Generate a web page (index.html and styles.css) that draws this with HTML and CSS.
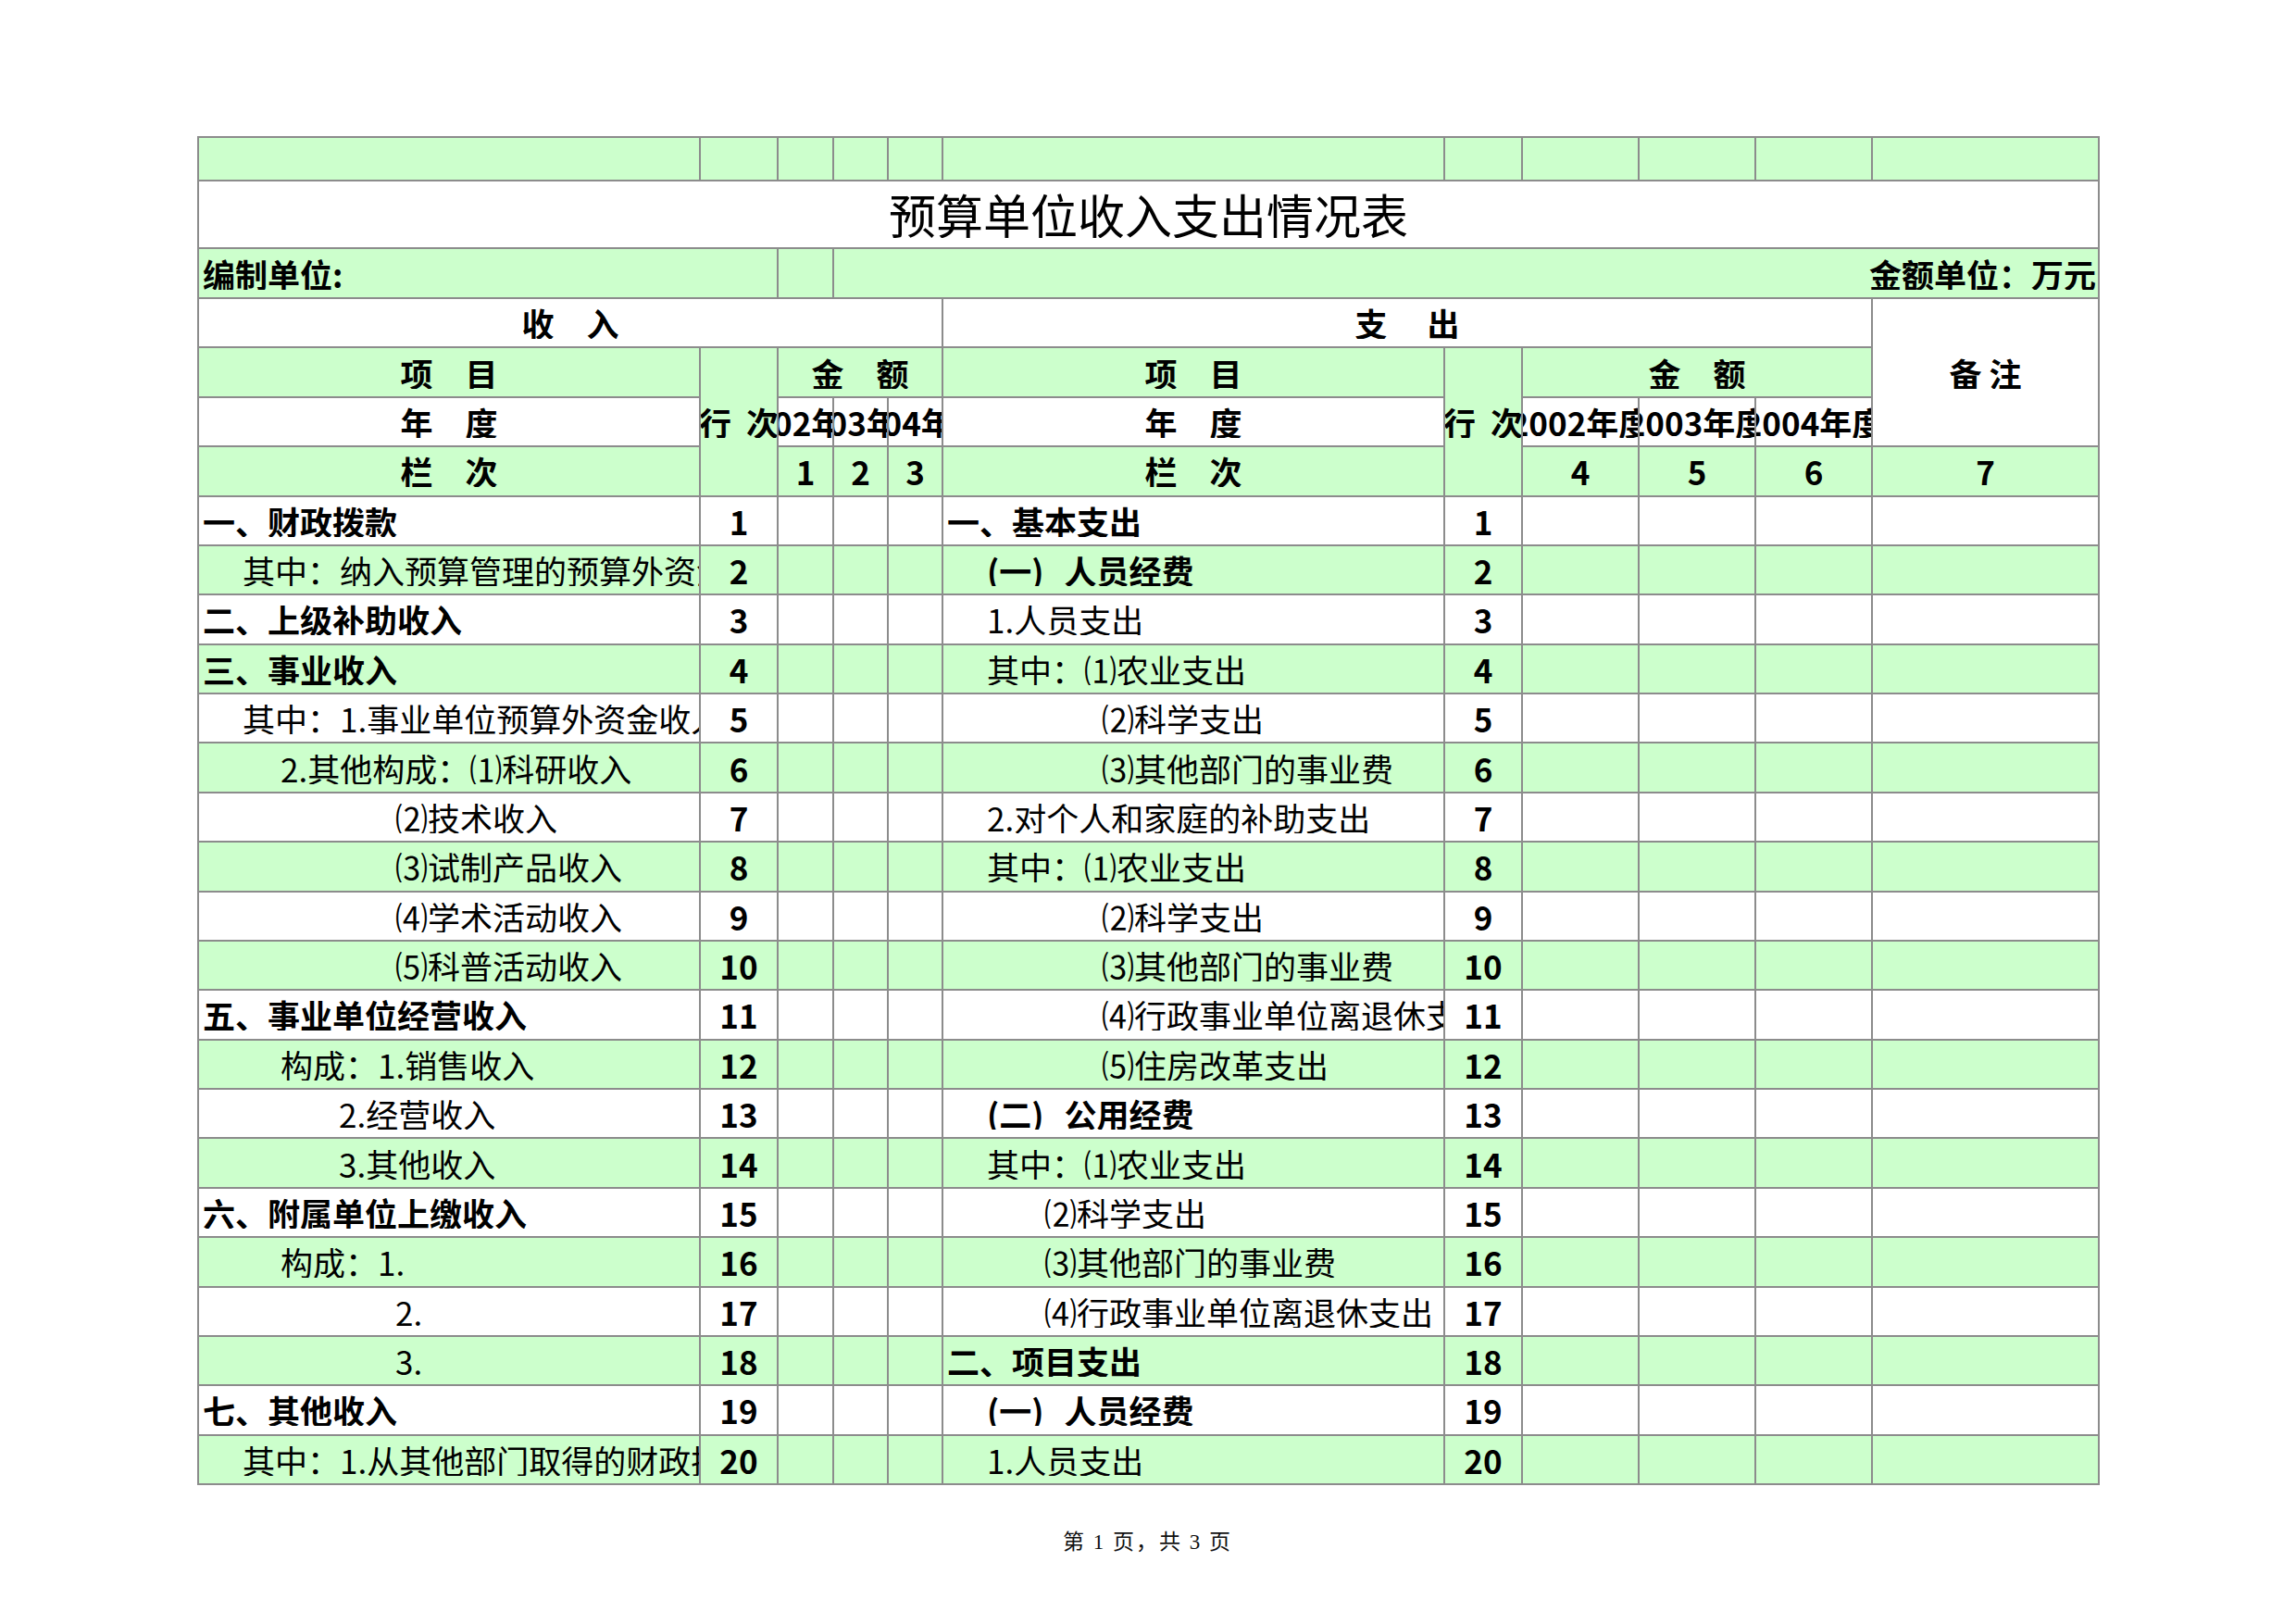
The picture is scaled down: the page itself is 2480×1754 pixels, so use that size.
FILE: index.html
```html
<!DOCTYPE html>
<html lang="zh-CN">
<head>
<meta charset="utf-8">
<title>预算单位收入支出情况表</title>
<link rel="stylesheet" href="styles.css">
</head>
<body>
<div class="page">
<table class="sheet">
<colgroup>
<col class="w-item"><col class="w-row"><col class="w-a1"><col class="w-a2"><col class="w-a2">
<col class="w-item"><col class="w-row"><col class="w-b"><col class="w-b"><col class="w-b"><col class="w-note">
</colgroup>
<tbody>
<tr class="r-top g">
<td></td><td></td><td></td><td></td><td></td><td></td><td></td><td></td><td></td><td></td><td></td>
</tr>
<tr class="r-title">
<td colspan="11"><div class="c ctr title">预算单位收入支出情况表</div></td>
</tr>
<tr class="r-unit g">
<td colspan="2"><div class="c b i0">编制单位:</div></td>
<td></td>
<td colspan="8"><div class="c b rt">金额单位：万元</div></td>
</tr>
<tr class="rh">
<td colspan="5"><div class="c ctr b">收　入</div></td>
<td colspan="5"><div class="c ctr b">支　 出</div></td>
<td rowspan="3"><div class="c ctr b">备 注</div></td>
</tr>
<tr class="rh g">
<td><div class="c ctr b">项　目</div></td>
<td rowspan="3"><div class="c ctr b">行&nbsp;&nbsp;次</div></td>
<td colspan="3"><div class="c ctr b">金　额</div></td>
<td><div class="c ctr b">项　目</div></td>
<td rowspan="3"><div class="c ctr b">行&nbsp;&nbsp;次</div></td>
<td colspan="3"><div class="c ctr b">金　额</div></td>
</tr>
<tr class="rh">
<td><div class="c ctr b">年　度</div></td>
<td><div class="c ctr b">2002年度</div></td>
<td><div class="c ctr b">2003年度</div></td>
<td><div class="c ctr b">2004年度</div></td>
<td><div class="c ctr b">年　度</div></td>
<td><div class="c ctr b">2002年度</div></td>
<td><div class="c ctr b">2003年度</div></td>
<td><div class="c ctr b">2004年度</div></td>
</tr>
<tr class="rh g">
<td><div class="c ctr b">栏　次</div></td>
<td><div class="c ctr b">1</div></td>
<td><div class="c ctr b">2</div></td>
<td><div class="c ctr b">3</div></td>
<td><div class="c ctr b">栏　次</div></td>
<td><div class="c ctr b">4</div></td>
<td><div class="c ctr b">5</div></td>
<td><div class="c ctr b">6</div></td>
<td><div class="c ctr b">7</div></td>
</tr>

<tr class="rh">
<td><div class="c b i0">一、财政拨款</div></td><td><div class="c ctr b">1</div></td><td></td><td></td><td></td>
<td><div class="c b i0">一、基本支出</div></td><td><div class="c ctr b">1</div></td><td></td><td></td><td></td><td></td>
</tr>
<tr class="rh g">
<td><div class="c i1">其中：纳入预算管理的预算外资金收入</div></td><td><div class="c ctr b">2</div></td><td></td><td></td><td></td>
<td><div class="c b i1">(一)<span class="gap"></span>人员经费</div></td><td><div class="c ctr b">2</div></td><td></td><td></td><td></td><td></td>
</tr>
<tr class="rh">
<td><div class="c b i0">二、上级补助收入</div></td><td><div class="c ctr b">3</div></td><td></td><td></td><td></td>
<td><div class="c i1">1.人员支出</div></td><td><div class="c ctr b">3</div></td><td></td><td></td><td></td><td></td>
</tr>
<tr class="rh g">
<td><div class="c b i0">三、事业收入</div></td><td><div class="c ctr b">4</div></td><td></td><td></td><td></td>
<td><div class="c i1">其中：⑴农业支出</div></td><td><div class="c ctr b">4</div></td><td></td><td></td><td></td><td></td>
</tr>
<tr class="rh">
<td><div class="c i1">其中：1.事业单位预算外资金收入</div></td><td><div class="c ctr b">5</div></td><td></td><td></td><td></td>
<td><div class="c i4">⑵科学支出</div></td><td><div class="c ctr b">5</div></td><td></td><td></td><td></td><td></td>
</tr>
<tr class="rh g">
<td><div class="c i2">2.其他构成：⑴科研收入</div></td><td><div class="c ctr b">6</div></td><td></td><td></td><td></td>
<td><div class="c i4">⑶其他部门的事业费</div></td><td><div class="c ctr b">6</div></td><td></td><td></td><td></td><td></td>
</tr>
<tr class="rh">
<td><div class="c i5">⑵技术收入</div></td><td><div class="c ctr b">7</div></td><td></td><td></td><td></td>
<td><div class="c i1">2.对个人和家庭的补助支出</div></td><td><div class="c ctr b">7</div></td><td></td><td></td><td></td><td></td>
</tr>
<tr class="rh g">
<td><div class="c i5">⑶试制产品收入</div></td><td><div class="c ctr b">8</div></td><td></td><td></td><td></td>
<td><div class="c i1">其中：⑴农业支出</div></td><td><div class="c ctr b">8</div></td><td></td><td></td><td></td><td></td>
</tr>
<tr class="rh">
<td><div class="c i5">⑷学术活动收入</div></td><td><div class="c ctr b">9</div></td><td></td><td></td><td></td>
<td><div class="c i4">⑵科学支出</div></td><td><div class="c ctr b">9</div></td><td></td><td></td><td></td><td></td>
</tr>
<tr class="rh g">
<td><div class="c i5">⑸科普活动收入</div></td><td><div class="c ctr b">10</div></td><td></td><td></td><td></td>
<td><div class="c i4">⑶其他部门的事业费</div></td><td><div class="c ctr b">10</div></td><td></td><td></td><td></td><td></td>
</tr>
<tr class="rh">
<td><div class="c b i0">五、事业单位经营收入</div></td><td><div class="c ctr b">11</div></td><td></td><td></td><td></td>
<td><div class="c i4">⑷行政事业单位离退休支出</div></td><td><div class="c ctr b">11</div></td><td></td><td></td><td></td><td></td>
</tr>
<tr class="rh g">
<td><div class="c i2">构成：1.销售收入</div></td><td><div class="c ctr b">12</div></td><td></td><td></td><td></td>
<td><div class="c i4">⑸住房改革支出</div></td><td><div class="c ctr b">12</div></td><td></td><td></td><td></td><td></td>
</tr>
<tr class="rh">
<td><div class="c i3">2.经营收入</div></td><td><div class="c ctr b">13</div></td><td></td><td></td><td></td>
<td><div class="c b i1">(二)<span class="gap"></span>公用经费</div></td><td><div class="c ctr b">13</div></td><td></td><td></td><td></td><td></td>
</tr>
<tr class="rh g">
<td><div class="c i3">3.其他收入</div></td><td><div class="c ctr b">14</div></td><td></td><td></td><td></td>
<td><div class="c i1">其中：⑴农业支出</div></td><td><div class="c ctr b">14</div></td><td></td><td></td><td></td><td></td>
</tr>
<tr class="rh">
<td><div class="c b i0">六、附属单位上缴收入</div></td><td><div class="c ctr b">15</div></td><td></td><td></td><td></td>
<td><div class="c i6">⑵科学支出</div></td><td><div class="c ctr b">15</div></td><td></td><td></td><td></td><td></td>
</tr>
<tr class="rh g">
<td><div class="c i2">构成：1.</div></td><td><div class="c ctr b">16</div></td><td></td><td></td><td></td>
<td><div class="c i6">⑶其他部门的事业费</div></td><td><div class="c ctr b">16</div></td><td></td><td></td><td></td><td></td>
</tr>
<tr class="rh">
<td><div class="c i5">2.</div></td><td><div class="c ctr b">17</div></td><td></td><td></td><td></td>
<td><div class="c i6">⑷行政事业单位离退休支出</div></td><td><div class="c ctr b">17</div></td><td></td><td></td><td></td><td></td>
</tr>
<tr class="rh g">
<td><div class="c i5">3.</div></td><td><div class="c ctr b">18</div></td><td></td><td></td><td></td>
<td><div class="c b i0">二、项目支出</div></td><td><div class="c ctr b">18</div></td><td></td><td></td><td></td><td></td>
</tr>
<tr class="rh">
<td><div class="c b i0">七、其他收入</div></td><td><div class="c ctr b">19</div></td><td></td><td></td><td></td>
<td><div class="c b i1">(一)<span class="gap"></span>人员经费</div></td><td><div class="c ctr b">19</div></td><td></td><td></td><td></td><td></td>
</tr>
<tr class="rh g">
<td><div class="c i1">其中：1.从其他部门取得的财政拨款</div></td><td><div class="c ctr b">20</div></td><td></td><td></td><td></td>
<td><div class="c i1">1.人员支出</div></td><td><div class="c ctr b">20</div></td><td></td><td></td><td></td><td></td>
</tr>
</tbody>
</table>
<div class="foot">第 1 页，共 3 页</div>
</div>
</body>
</html>
```
FILE: styles.css
```css
html, body {
  margin: 0;
  padding: 0;
  background: #ffffff;
}
body {
  width: 2480px;
  height: 1754px;
  overflow: hidden;
  font-family: "Noto Sans CJK SC", "Noto Sans", sans-serif;
  color: #000;
}
.page {
  padding: 147px 0 0 213px;
}
.sheet {
  border-collapse: collapse;
  table-layout: fixed;
  width: 2053px;
}
.w-item { width: 542px; }
.w-row { width: 84px; }
.w-a1 { width: 60px; }
.w-a2 { width: 59px; }
.w-b { width: 126px; }
.w-note { width: 245px; }

.sheet td {
  border: 2px solid #8c8c8c;
  padding: 0;
  font-size: 35px;
  line-height: 1;
  overflow: hidden;
  white-space: nowrap;
  vertical-align: middle;
}
.g td, td.g { background: #ccffcc; }
.r-top { height: 47px; }
.r-title { height: 73px; }
.r-unit { height: 54px; }
.rh { height: 53.375px; }

.c {
  display: flex;
  justify-content: flex-start;
  overflow: hidden;
  white-space: nowrap;
  padding-top: 0;
}
.ctr { justify-content: center; }
.rt { justify-content: flex-end; padding-right: 2px; }
.b { font-weight: 700; }
.title {
  font-size: 51px;
  font-weight: 400;
}
.gap { display: inline-block; width: 22px; }

.i0 { padding-left: 4px; }
.i1 { padding-left: 47px; }
.i2 { padding-left: 88px; }
.i3 { padding-left: 151px; }
.i4 { padding-left: 171px; }
.i5 { padding-left: 212px; }
.i6 { padding-left: 109px; }

.foot {
  width: 2053px;
  margin-top: 50px;
  text-align: center;
  font-family: "Liberation Serif", "Noto Sans CJK SC", serif;
  font-size: 23px;
  letter-spacing: 2px;
  line-height: 24px;
  color: #111;
}
```
